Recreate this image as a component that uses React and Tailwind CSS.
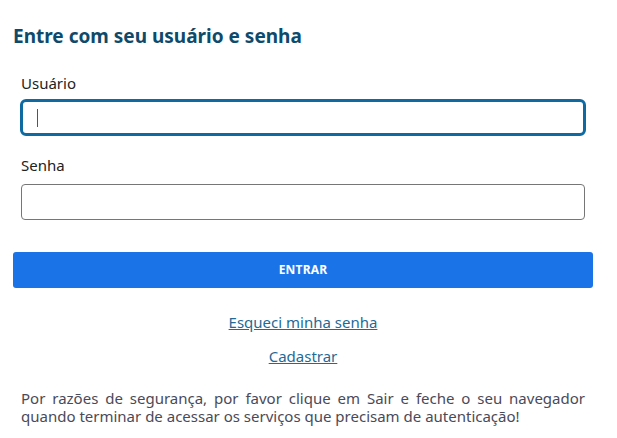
import React from "react";

export default function App() {
  return (
    <div className="min-h-screen bg-white" style={{ fontFamily: '"Noto Sans", "Open Sans", sans-serif' }}>
      <div className="w-[580px] ml-[13px] pt-[24px]">
        <h1 className="text-[19px] leading-[24px] font-bold text-[#0d4a6b]">
          Entre com seu usuário e senha
        </h1>

        <div className="px-2 mt-[25px]">
          <label className="block text-[15px] leading-[20px] text-[#222]">Usuário</label>
          <div className="mt-[6px] -mx-px h-[37px] rounded-[6px] border-[3px] border-[#0e6aa0] flex items-center pl-[14px]">
            <span className="w-px h-[18px] bg-[#555]" />
          </div>

          <label className="block mt-[19px] text-[15px] leading-[20px] text-[#222]">Senha</label>
          <input
            type="password"
            className="block mt-[9px] w-full h-[36px] rounded-[4px] border border-[#767676] outline-none"
          />
        </div>

        <button className="mt-[32px] w-full h-[36px] rounded-[3px] bg-[#1b73e8] text-white text-[12px] font-bold tracking-[0.2px]">
          ENTRAR
        </button>

        <div className="flex flex-col items-center mt-[24px] gap-[14px] text-[15px] leading-[20px]">
          <a href="#" className="text-[#1f6a96] underline">Esqueci minha senha</a>
          <a href="#" className="text-[#1f6a96] underline">Cadastrar</a>
        </div>

        <p className="px-2 mt-[23px] text-[15px] leading-[18px] text-[#4a4a58] text-justify">
          Por razões de segurança, por favor clique em Sair e feche o seu navegador quando terminar de acessar os serviços que precisam de autenticação!
        </p>
      </div>
    </div>
  );
}
